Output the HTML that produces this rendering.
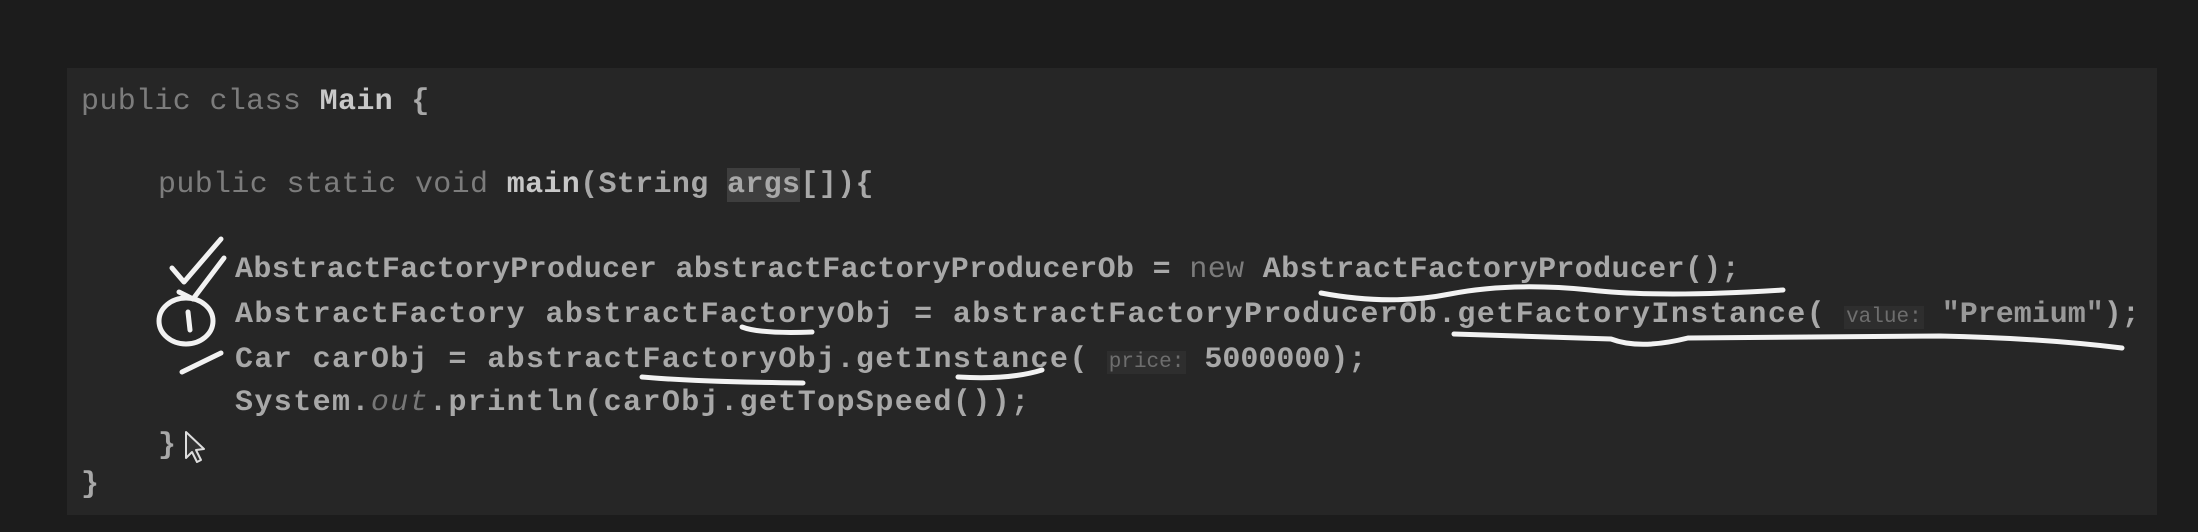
<!DOCTYPE html>
<html><head><style>
html,body{margin:0;padding:0;background:#1c1c1c;width:2198px;height:532px;overflow:hidden;position:relative}
.panel{position:absolute;left:67px;top:68px;width:2090px;height:447px;background:#262626}
.l{position:absolute;font-family:"Liberation Mono",monospace;font-size:30px;line-height:36px;color:#a8a8a8;white-space:pre;font-weight:bold;letter-spacing:0.35px}
.w{letter-spacing:1.4px}
.t{letter-spacing:0px}
.k{color:#7c7c7c;font-weight:normal}
.b{color:#c8c8c8}
.i{color:#777;font-style:italic;font-weight:normal}
.h{font-size:21px;color:#6e6e6e;background:#2e2e2e;font-weight:normal;padding:0 2px;letter-spacing:0}
.s{color:#999}
.sel{background:#3e3e3e}
</style></head><body>
<div class="panel"></div>
<div class="l" style="left:81px;top:84px"><span class="k">public class</span> <span class="b">Main</span> {</div>
<div class="l" style="left:158px;top:167px"><span class="k">public static void</span> <span class="b">main</span>(String <span class="sel">args</span>[]){</div>
<div class="l" style="left:235px;top:252px">AbstractFactoryProducer abstractFactoryProducerOb = <span class="k">new</span> AbstractFactoryProducer();</div>
<div class="l w" style="left:235px;top:297px">AbstractFactory abstractFactoryObj = abstractFactoryProducerOb.getFactoryInstance(<span class="t"> <span class="h">value:</span> <span class="s">"Premium"</span>);</span></div>
<div class="l w" style="left:235px;top:342px">Car carObj = abstractFactoryObj.getInstance(<span class="t"> <span class="h">price:</span> 5000000);</span></div>
<div class="l w" style="left:235px;top:385px">System.<span class="i">out</span>.println(carObj.getTopSpeed());</div>
<div class="l" style="left:158px;top:428px">}</div>
<div class="l" style="left:81px;top:467px">}</div>
<svg width="2198" height="532" style="position:absolute;left:0;top:0" fill="none" stroke="#f2f2f2" stroke-linecap="round" stroke-linejoin="round">
<g stroke-width="5">
<path d="M172 268 L184 282 L221 239"/>
<path d="M179 292 L193 299 L224 258"/>
<ellipse cx="186" cy="321" rx="27" ry="23"/>
<path d="M188 312 L190 330"/>
<path d="M182 372 L221 353"/>
<path d="M742 327 Q760 334 812 332"/>
<path d="M642 377 Q700 382 803 383"/>
<path d="M958 377 Q1010 380 1042 370"/>
<path d="M1321 293 Q1390 306 1450 294 Q1510 282 1590 290 Q1660 298 1783 290"/>
<path d="M1454 334 L1611 339 Q1640 350 1688 338 L1940 336 Q2040 338 2122 348"/>
</g>
<path d="M186 432 L186 458 L192 452 L197 462 L201 460 L196 450 L204 449 Z" stroke="#ddd" stroke-width="2" fill="#333"/>
</svg>
</body></html>
